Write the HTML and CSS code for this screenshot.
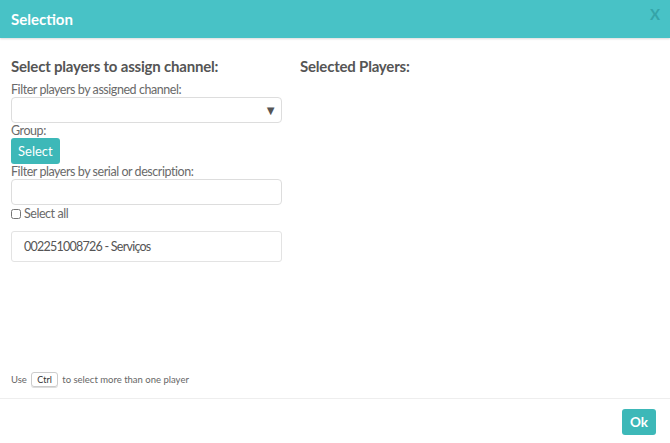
FILE: index.html
```html
<!DOCTYPE html>
<html lang="pt">
<head>
    <meta charset="UTF-8">
    <meta name="viewport" content="width=device-width, initial-scale=1.0">
    <title>Selection</title>
    <link rel="stylesheet" href="styles.css">
</head>
<body>
    <div class="modal">
        <div class="modal-header">
            <h1>Selection</h1>
            <span class="close">X</span>
        </div>
        <div class="modal-body">
            <div class="col">
                <h2>Select players to assign channel:</h2>
                <label>Filter players by assigned channel:</label>
                <div class="select-box"><span class="arrow">&#9660;</span></div>
                <label>Group:</label>
                <button class="btn">Select</button>
                <label>Filter players by serial or description:</label>
                <input type="text" class="text-input">
                <label class="check"><input type="checkbox"> Select all</label>
                <div class="player-list">
                    <div class="player">002251008726 - Serviços</div>
                </div>
                <p class="hint">Use <kbd>Ctrl</kbd> to select more than one player</p>
            </div>
            <div class="col">
                <h2>Selected Players:</h2>
            </div>
        </div>
        <div class="modal-footer">
            <button class="btn">Ok</button>
        </div>
    </div>
</body>
</html>
```

FILE: styles.css
```css
body {
    margin: 0;
    font-family: Lato, "Open Sans", sans-serif;
    color: #555;
    background-color: #fff;
}
.modal {
    width: 670px;
    height: 443px;
    display: flex;
    flex-direction: column;
}
.modal-header {
    background-color: #48c2c6;
    height: 38px;
    display: flex;
    align-items: center;
    justify-content: space-between;
    padding: 0 10px 0 11px;
    box-shadow: 0 1px 2px rgba(0, 0, 0, 0.15);
}
.modal-header h1 {
    margin: 0;
    font-size: 15px;
    color: #fff;
    font-weight: bold;
}
.close {
    color: #35a4a8;
    font-weight: bold;
    font-size: 15px;
    margin-top: -10px;
}
.modal-body {
    flex: 1;
    display: flex;
    gap: 18px;
    padding: 19px 11px 0;
    border-bottom: 1px solid #eee;
}
.col {
    width: 271px;
    display: flex;
    flex-direction: column;
}
h2 {
    font-size: 15px;
    font-weight: bold;
    color: #555;
    margin: 0 0 6px;
    line-height: 19px;
    letter-spacing: -0.2px;
}
label {
    font-size: 12.5px;
    color: #6a6a6a;
    line-height: 15px;
    letter-spacing: -0.45px;
}
.select-box {
    height: 26px;
    box-sizing: border-box;
    border: 1px solid #ddd;
    border-radius: 4px;
    display: flex;
    align-items: center;
    justify-content: flex-end;
    padding-right: 4px;
}
.arrow {
    font-size: 13px;
    color: #555;
}
.btn {
    align-self: flex-start;
    background-color: #3db8b8;
    color: #fff;
    border: none;
    border-radius: 3px;
    font-family: inherit;
    font-size: 13px;
    padding: 0 7px;
    height: 26px;
    margin: 0;
    cursor: pointer;
}
.text-input {
    height: 26px;
    box-sizing: border-box;
    border: 1px solid #ddd;
    border-radius: 4px;
    margin: 0;
}
.check {
    display: flex;
    align-items: center;
    gap: 3px;
    padding-top: 1px;
}
.check input {
    margin: 0;
    width: 10px;
    height: 10px;
}
.player-list {
    margin-top: 10px;
    height: 31px;
    box-sizing: border-box;
    border: 1px solid #e3e3e3;
    border-radius: 3px;
    display: flex;
    align-items: center;
}
.player {
    font-size: 12.5px;
    padding-left: 12px;
    color: #555;
    letter-spacing: -0.75px;
}
.hint {
    margin: auto 0 13px 0;
    font-size: 9.5px;
    color: #666;
}
kbd {
    font-family: inherit;
    font-size: 9px;
    color: #333;
    border: 1px solid #ccc;
    border-radius: 3px;
    padding: 1px 5px;
    margin: 0 2px;
    box-shadow: 0 1px 0 #ddd;
}
.modal-footer {
    height: 44px;
    display: flex;
    justify-content: flex-end;
    align-items: center;
    padding-right: 14px;
}
.modal-footer .btn {
    align-self: center;
    padding: 0 8px;
    margin: 2px 0 0;
    font-size: 13.5px;
    font-weight: bold;
}
```
